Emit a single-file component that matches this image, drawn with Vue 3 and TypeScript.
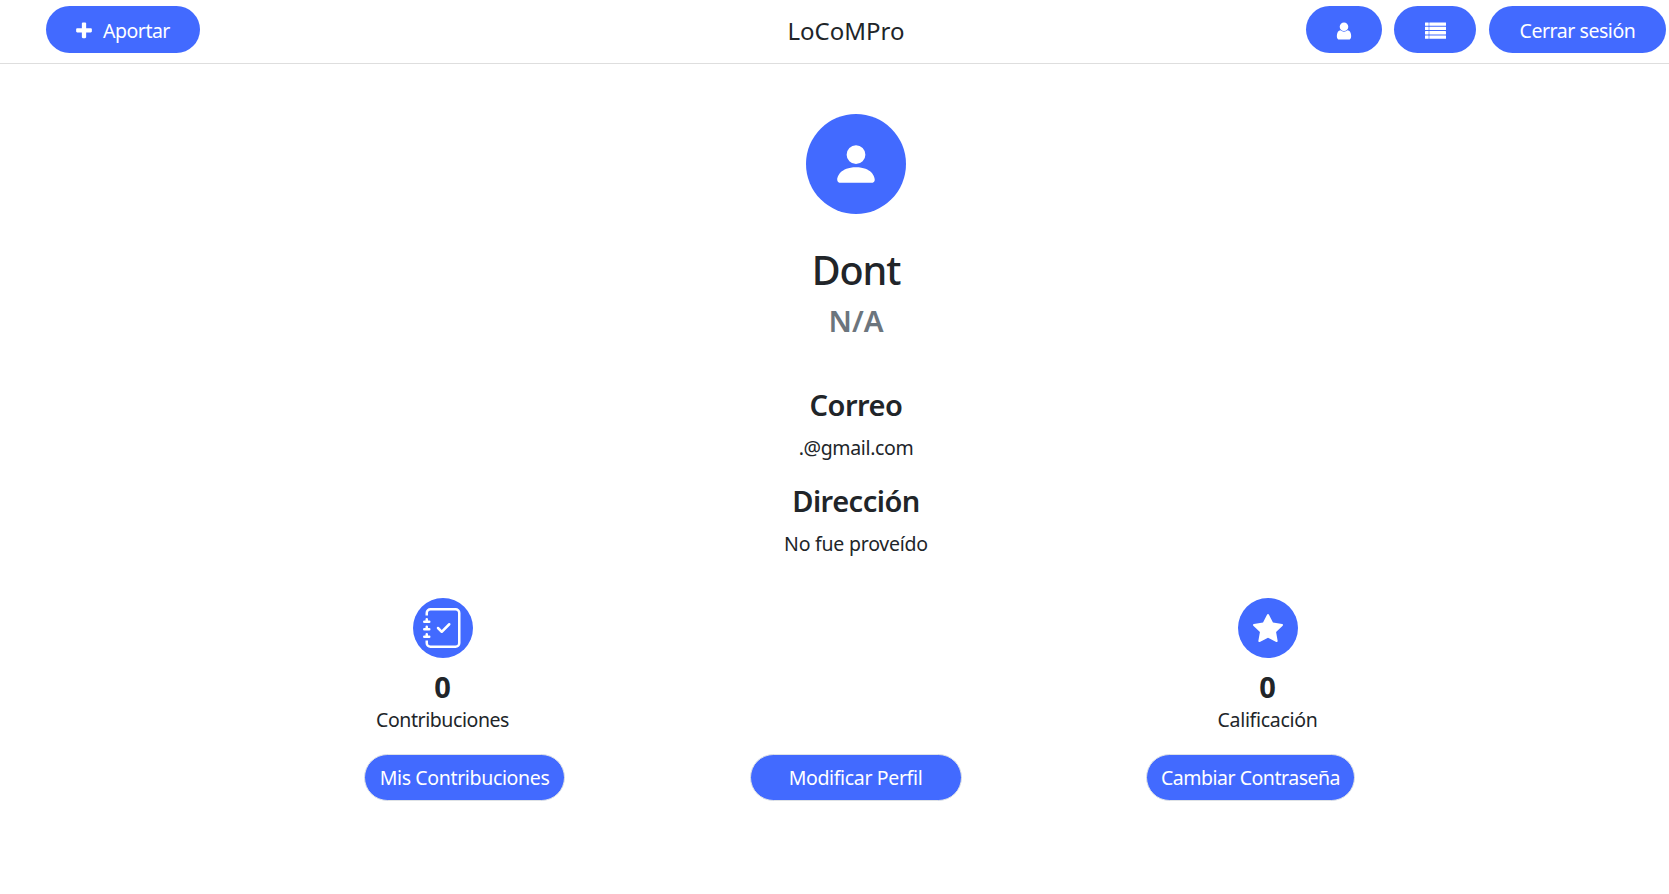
<script setup lang="ts">
interface Stat {
  id: string
  value: number
  label: string
  size: number
  paths: string[]
}

interface Action {
  id: string
  label: string
}

const profile = {
  name: 'Dont',
  role: 'N/A',
  email: '.@gmail.com',
  address: 'No fue proveído',
}

const stats: Stat[] = [
  {
    id: 'contributions',
    value: 0,
    label: 'Contribuciones',
    size: 40,
    paths: [
      'M10.854 6.146a.5.5 0 0 1 0 .708l-3 3a.5.5 0 0 1-.708 0l-1.5-1.5a.5.5 0 1 1 .708-.708L7.5 8.793l2.646-2.647a.5.5 0 0 1 .708 0z',
      'M3 0h10a2 2 0 0 1 2 2v12a2 2 0 0 1-2 2H3a2 2 0 0 1-2-2v-1h1v1a1 1 0 0 0 1 1h10a1 1 0 0 0 1-1V2a1 1 0 0 0-1-1H3a1 1 0 0 0-1 1v1H1V2a2 2 0 0 1 2-2z',
      'M1 5v-.5a.5.5 0 0 1 1 0V5h.5a.5.5 0 0 1 0 1h-2a.5.5 0 0 1 0-1H1zm0 3v-.5a.5.5 0 0 1 1 0V8h.5a.5.5 0 0 1 0 1h-2a.5.5 0 0 1 0-1H1zm0 3v-.5a.5.5 0 0 1 1 0v.5h.5a.5.5 0 0 1 0 1h-2a.5.5 0 0 1 0-1H1z',
    ],
  },
  {
    id: 'rating',
    value: 0,
    label: 'Calificación',
    size: 30,
    paths: [
      'M3.612 15.443c-.386.198-.824-.149-.746-.592l.83-4.73L.173 6.765c-.329-.314-.158-.888.283-.95l4.898-.696L7.538.792c.197-.39.73-.39.927 0l2.184 4.327 4.898.696c.441.062.612.636.282.95l-3.522 3.356.83 4.73c.078.443-.36.79-.746.592L8 13.187l-4.389 2.256z',
    ],
  },
]

const actions: Action[] = [
  { id: 'mine', label: 'Mis Contribuciones' },
  { id: 'edit', label: 'Modificar Perfil' },
  { id: 'password', label: 'Cambiar Contraseña' },
]

const listRows = [128, 512, 896, 1280]
</script>

<template>
  <header class="navbar">
    <div class="nav-side">
      <button class="pill add" type="button">
        <svg class="nav-icon" viewBox="0 0 1792 1792">
          <path d="M1600 736v192q0 40-28 68t-68 28h-416v416q0 40-28 68t-68 28h-192q-40 0-68-28t-28-68v-416h-416q-40 0-68-28t-28-68v-192q0-40 28-68t68-28h416v-416q0-40 28-68t68-28h192q40 0 68 28t28 68v416h416q40 0 68 28t28 68z" />
        </svg>
        <span>Aportar</span>
      </button>
    </div>
    <div class="brand">LoCoMPro</div>
    <nav class="nav-side end">
      <button class="pill user" type="button" aria-label="Perfil">
        <svg class="nav-icon" viewBox="0 0 1792 1792">
          <path d="M1536 1399q0 109-62.5 187t-150.5 78h-854q-88 0-150.5-78t-62.5-187q0-85 8.5-160.5t31.5-152 58.5-131 94-89 134.5-34.5q131 128 313 128t313-128q76 0 134.5 34.5t94 89 58.5 131 31.5 152 8.5 160.5zm-256-887q0 159-112.5 271.5t-271.5 112.5-271.5-112.5-112.5-271.5 112.5-271.5 271.5-112.5 271.5 112.5 112.5 271.5z" />
        </svg>
      </button>
      <button class="pill list" type="button" aria-label="Lista">
        <svg class="nav-icon" viewBox="0 0 21 20">
          <g v-for="(y, i) in listRows" :key="y">
            <rect x="0" :y="1.5 + i * 4.3" width="3.7" height="3.3" rx="0.3" />
            <rect x="4.3" :y="1.5 + i * 4.3" width="16.7" height="3.3" rx="0.3" />
          </g>
        </svg>
      </button>
      <button class="pill logout" type="button"><span>Cerrar sesión</span></button>
    </nav>
  </header>

  <main class="profile">
    <div class="avatar">
      <svg viewBox="0 0 16 16" width="50" height="50">
        <path d="M3 14s-1 0-1-1 1-4 6-4 6 3 6 4-1 1-1 1H3zm5-6a3 3 0 1 0 0-6 3 3 0 0 0 0 6z" />
      </svg>
    </div>
    <h1 class="name">{{ profile.name }}</h1>
    <h2 class="role">{{ profile.role }}</h2>

    <h3 class="heading mail-heading">Correo</h3>
    <p class="detail mail">{{ profile.email }}</p>
    <h3 class="heading address-heading">Dirección</h3>
    <p class="detail address">{{ profile.address }}</p>

    <section class="stats">
      <div v-for="stat in stats" :key="stat.id" class="stat" :class="stat.id">
        <div class="badge">
          <svg viewBox="0 0 16 16" :width="stat.size" :height="stat.size">
            <path v-for="d in stat.paths" :key="d" :d="d" />
          </svg>
        </div>
        <strong class="value">{{ stat.value }}</strong>
        <span class="label">{{ stat.label }}</span>
      </div>
    </section>

    <section class="actions">
      <button v-for="action in actions" :key="action.id" type="button" class="action" :class="action.id">
        {{ action.label }}
      </button>
    </section>
  </main>
</template>

<style>
body {
  background: #fff;
}
</style>

<style scoped>
.navbar,
.profile {
  box-sizing: border-box;
  font-family: "Noto Sans", "Open Sans", sans-serif;
  font-size: 19.5px;
  color: #212529;
}

.navbar {
  display: grid;
  grid-template-columns: 1fr auto 1fr;
  height: 64px;
  padding: 6px 3px 0 46px;
  border-bottom: 1px solid #dedede;
}

.nav-side {
  display: flex;
  align-items: flex-start;
}

.nav-side.end {
  justify-content: flex-end;
  gap: 12px;
}

.brand {
  margin-right: 20px;
  font-size: 24px;
  line-height: 49px;
}

button {
  box-sizing: border-box;
  margin: 0;
  font: inherit;
  color: #fff;
  background: #426aff;
  white-space: nowrap;
}

.pill {
  display: flex;
  align-items: center;
  justify-content: center;
  height: 47px;
  padding: 2px 0 0;
  border: 0;
  border-radius: 24px;
}

.add {
  width: 154px;
  padding-right: 2px;
  gap: 9px;
  letter-spacing: -0.5px;
}

.user {
  width: 76px;
}

.list {
  width: 82px;
  margin-right: 1px;
}

.logout {
  width: 177px;
  letter-spacing: -0.45px;
}

.nav-icon {
  width: 20px;
  height: 20px;
}

.list .nav-icon {
  width: 21px;
}

svg {
  display: block;
  flex: none;
  fill: #fff;
}

.profile {
  display: flex;
  flex-direction: column;
  align-items: center;
  padding: 50px 0 0 43px;
}

.avatar,
.badge {
  display: flex;
  align-items: center;
  justify-content: center;
  border-radius: 50%;
  background: #426aff;
}

.avatar {
  width: 100px;
  height: 100px;
}

h1,
h2,
h3,
p {
  margin: 0;
  font-weight: 600;
}

.name {
  margin-top: 32px;
  font-size: 39.5px;
  font-weight: 550;
  line-height: 48px;
  letter-spacing: -1.1px;
}

.role {
  margin-top: 9px;
  font-size: 29.5px;
  line-height: 36px;
  color: #6c757d;
}

.heading {
  font-size: 29px;
  line-height: 34px;
  letter-spacing: -0.5px;
}

.mail-heading {
  margin-top: 49px;
}

.address-heading {
  margin-top: 21px;
}

.detail {
  margin-top: 11px;
  font-weight: 400;
  line-height: 30px;
  letter-spacing: -0.35px;
}

.address {
  letter-spacing: -0.23px;
}

.stats {
  display: flex;
  justify-content: space-between;
  width: 957px;
  margin: 39px 2px 0 0;
}

.stat {
  display: flex;
  flex-direction: column;
  align-items: center;
  width: 132px;
}

.badge {
  width: 60px;
  height: 60px;
}

.value {
  margin-top: 12px;
  font-size: 29px;
  line-height: 34px;
}

.label {
  margin-top: 1px;
  line-height: 30px;
  letter-spacing: -0.42px;
}

.rating .label {
  letter-spacing: -0.3px;
}

.actions {
  display: flex;
  justify-content: space-between;
  width: 991px;
  margin: 19px 0 0 7px;
}

.action {
  height: 47px;
  padding: 0;
  border: 1px solid #dee2e6;
  border-radius: 24px;
  letter-spacing: -0.35px;
}

.mine {
  width: 201px;
}

.edit {
  width: 212px;
}

.password {
  width: 209px;
  letter-spacing: -0.48px;
}
</style>
